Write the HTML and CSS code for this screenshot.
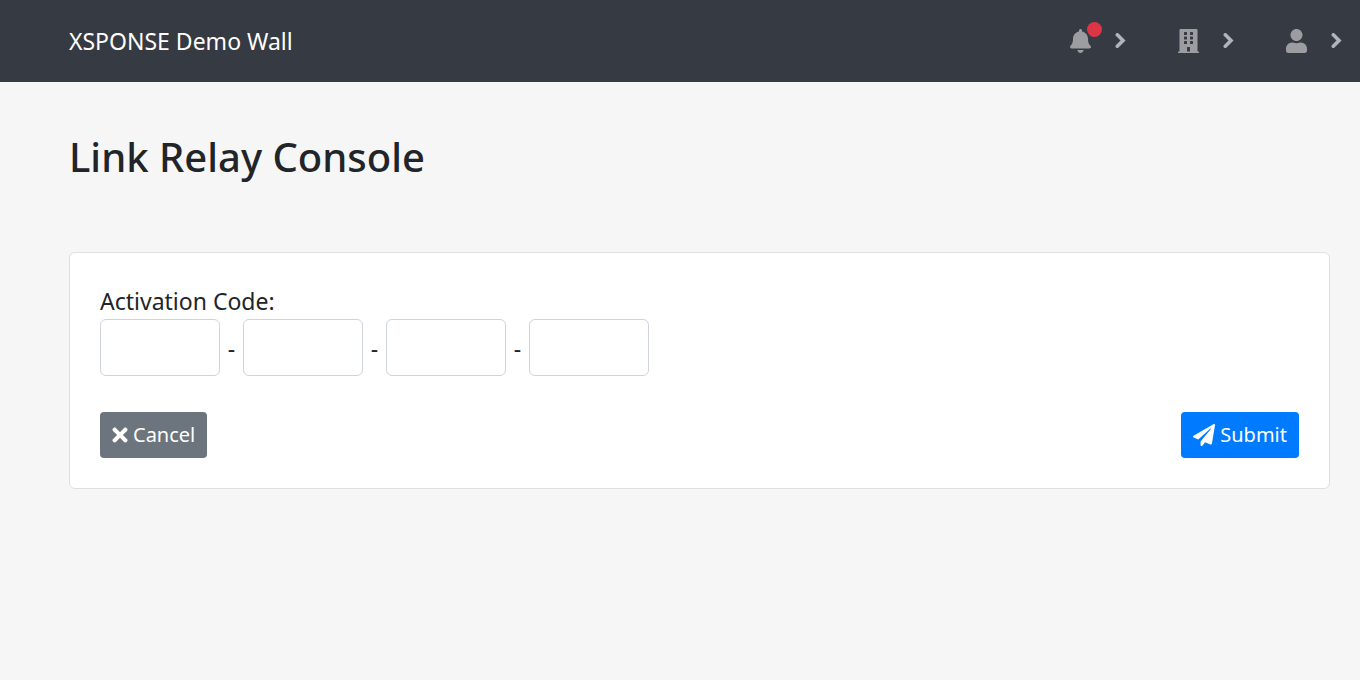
FILE: index.html
```html
<!DOCTYPE html>
<html lang="en">
<head>
<meta charset="utf-8">
<meta name="viewport" content="width=device-width, initial-scale=1">
<title>Link Relay Console</title>
<link rel="stylesheet" href="styles.css">
</head>
<body>
<header class="navbar">
  <a class="brand" href="#">XSPONSE Demo Wall</a>
  <nav class="menu">
    <button class="menu-item" type="button" aria-label="Notifications">
      <span class="bell">
        <svg class="icon" viewBox="0 0 448 512"><path d="M224 512c35.32 0 63.97-28.65 63.97-64H160.03c0 35.35 28.65 64 63.97 64zm215.39-149.71c-19.32-20.76-55.47-51.99-55.47-154.29 0-77.7-54.48-139.9-127.94-155.16V32c0-17.67-14.32-32-31.98-32s-31.98 14.33-31.98 32v20.84C118.56 68.1 64.08 130.3 64.08 208c0 102.3-36.15 133.53-55.47 154.29-6 6.45-8.66 14.16-8.61 21.71.11 16.4 12.98 32 32.1 32h383.8c19.12 0 32-15.6 32.1-32 .05-7.55-2.61-15.27-8.61-21.71z"/></svg>
        <span class="dot"></span>
      </span>
      <svg class="chevron" viewBox="0 0 11 16"><path d="M2.300 1.800 8 7.500l-5.700 5.700"/></svg>
    </button>
    <button class="menu-item" type="button" aria-label="Organization">
      <svg class="icon" viewBox="0 0 448 512"><path d="M436 480h-20V24c0-13.255-10.745-24-24-24H56C42.745 0 32 10.745 32 24v456H12c-6.627 0-12 5.373-12 12v20h448v-20c0-6.627-5.373-12-12-12zM128 76c0-6.627 5.373-12 12-12h40c6.627 0 12 5.373 12 12v40c0 6.627-5.373 12-12 12h-40c-6.627 0-12-5.373-12-12V76zm0 96c0-6.627 5.373-12 12-12h40c6.627 0 12 5.373 12 12v40c0 6.627-5.373 12-12 12h-40c-6.627 0-12-5.373-12-12v-40zm52 148h-40c-6.627 0-12-5.373-12-12v-40c0-6.627 5.373-12 12-12h40c6.627 0 12 5.373 12 12v40c0 6.627-5.373 12-12 12zm76 160h-64v-84c0-6.627 5.373-12 12-12h40c6.627 0 12 5.373 12 12v84zm64-172c0 6.627-5.373 12-12 12h-40c-6.627 0-12-5.373-12-12v-40c0-6.627 5.373-12 12-12h40c6.627 0 12 5.373 12 12v40zm0-96c0 6.627-5.373 12-12 12h-40c-6.627 0-12-5.373-12-12v-40c0-6.627 5.373-12 12-12h40c6.627 0 12 5.373 12 12v40zm0-96c0 6.627-5.373 12-12 12h-40c-6.627 0-12-5.373-12-12V76c0-6.627 5.373-12 12-12h40c6.627 0 12 5.373 12 12v40z"/></svg>
      <svg class="chevron" viewBox="0 0 11 16"><path d="M2.300 1.800 8 7.500l-5.700 5.700"/></svg>
    </button>
    <button class="menu-item" type="button" aria-label="Account">
      <svg class="icon" viewBox="0 0 448 512"><path d="M224 256c70.7 0 128-57.3 128-128S294.7 0 224 0 96 57.3 96 128s57.3 128 128 128zm89.6 32h-16.7c-22.2 10.2-46.9 16-72.9 16s-50.6-5.8-72.9-16h-16.7C60.2 288 0 348.2 0 422.4V464c0 26.5 21.5 48 48 48h352c26.5 0 48-21.5 48-48v-41.6c0-74.2-60.2-134.4-134.4-134.4z"/></svg>
      <svg class="chevron" viewBox="0 0 11 16"><path d="M2.300 1.800 8 7.500l-5.700 5.700"/></svg>
    </button>
  </nav>
</header>
<main class="page">
  <h1 class="title">Link Relay Console</h1>
  <form class="card">
    <label class="label" for="code-1">Activation Code:</label>
    <div class="code">
      <input class="code-part" id="code-1" type="text">
      <span class="dash">-</span>
      <input class="code-part" type="text" aria-label="Activation code, part 2">
      <span class="dash">-</span>
      <input class="code-part" type="text" aria-label="Activation code, part 3">
      <span class="dash">-</span>
      <input class="code-part" type="text" aria-label="Activation code, part 4">
    </div>
    <div class="actions">
      <button class="btn btn-secondary" type="button">
        <svg class="icon-times" viewBox="0 0 352 512"><path d="M242.72 256l100.07-100.07c12.28-12.28 12.28-32.19 0-44.48l-22.24-22.24c-12.28-12.28-32.19-12.28-44.48 0L176 189.28 75.93 89.21c-12.28-12.28-32.19-12.28-44.48 0L9.21 111.45c-12.28 12.28-12.28 32.19 0 44.48L109.28 256 9.21 356.07c-12.28 12.28-12.28 32.19 0 44.48l22.24 22.24c12.28 12.28 32.2 12.28 44.48 0L176 322.72l100.07 100.07c12.28 12.28 32.2 12.28 44.48 0l22.24-22.24c12.28-12.28 12.28-32.19 0-44.48L242.72 256z"/></svg>
        Cancel
      </button>
      <button class="btn btn-primary" type="submit">
        <svg class="icon-plane" viewBox="0 0 512 512"><path d="M476 3.2L12.500 270.6c-18.1 10.4-15.8 35.6 2.2 43.2L121 358.4l287.3-253.2c5.500-4.9 13.3 2.6 8.6 8.3L176 407v80.500c0 23.6 28.500 32.9 42.500 15.8L282 426l124.6 52.2c14.2 6 30.4-2.9 33-18.2l72-432C515 7.8 493.3-6.8 476 3.2z"/></svg>
        Submit
      </button>
    </div>
  </form>
</main>
</body>
</html>
```
FILE: styles.css
```css
* {
  box-sizing: border-box;
}

body {
  margin: 0;
  background: #f6f6f6;
  color: #212529;
  font-family: "Segoe UI", "Noto Sans", sans-serif;
  font-size: 23px;
  line-height: 32px;
}

.navbar {
  display: flex;
  align-items: center;
  justify-content: space-between;
  padding: 25px 18px 25px 69px;
  background: #363a42;
}

.brand {
  color: #fff;
  text-decoration: none;
}

.menu {
  display: flex;
  gap: 52px;
}

.menu-item {
  display: flex;
  align-items: center;
  gap: 24px;
  padding: 0;
  border: 0;
  background: none;
}

.bell {
  position: relative;
  display: flex;
}

.icon {
  width: 21px;
  height: 24px;
  fill: #9b9da0;
}

.dot {
  position: absolute;
  top: -7px;
  right: -11px;
  width: 15px;
  height: 15px;
  border-radius: 50%;
  background: #dc3545;
}

.chevron {
  width: 11px;
  height: 16px;
  fill: none;
  stroke: #afb5ba;
  stroke-width: 3.6;
  stroke-linecap: round;
}

.page {
  padding: 50px 30px 0 69px;
}

.title {
  margin: 0 0 70px;
  font-size: 40px;
  font-weight: 500;
  line-height: 50px;
}

.card {
  padding: 32px 30px 30px;
  border: 1px solid #dfdfdf;
  border-radius: 6px;
  background: #fff;
}

.label {
  display: block;
  margin-bottom: 2px;
}

.code {
  display: flex;
  align-items: center;
}

.code-part {
  width: 120px;
  height: 57px;
  padding: 8px 16px;
  border: 1px solid #ced4da;
  border-radius: 6px;
  background: #fff;
  color: #495057;
  font: inherit;
}

.dash {
  width: 23px;
  text-align: center;
}

.actions {
  display: flex;
  justify-content: space-between;
  margin-top: 36px;
}

.btn {
  display: flex;
  align-items: center;
  gap: 5px;
  height: 46px;
  padding: 0 12px;
  border: 0;
  border-radius: 4px;
  color: #fff;
  font: inherit;
  font-size: 20px;
}

.btn-secondary {
  background: #6c757d;
}

.btn-primary {
  background: #007bff;
}

.icon-times {
  width: 16px;
  height: 22px;
  fill: #fff;
}

.icon-plane {
  width: 22px;
  height: 22px;
  fill: #fff;
}
```
